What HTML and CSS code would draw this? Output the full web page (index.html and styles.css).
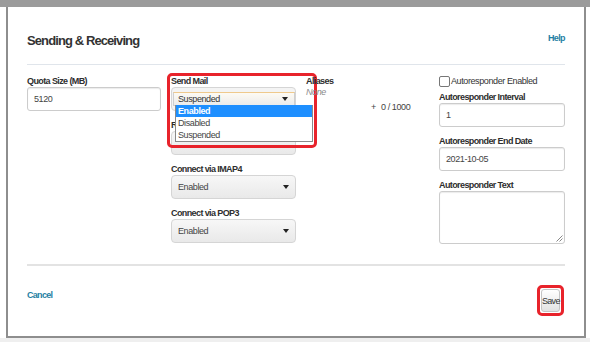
FILE: index.html
```html
<!DOCTYPE html>
<html lang="en">
<head>
    <meta charset="UTF-8">
    <meta name="viewport" content="width=device-width, initial-scale=1.0">
    <title>Sending &amp; Receiving</title>
    <link rel="stylesheet" href="styles.css">
</head>
<body>

    <div class="topbar"></div>

    <div class="stage">
        <div class="modal">

            <header class="modal-header">
                <h2 class="title">Sending &amp; Receiving</h2>
                <a class="link help" href="#">Help</a>
            </header>

            <div class="rule"></div>

            <div class="modal-body">

                <div class="col">
                    <div class="group group-last">
                        <label class="field-label">Quota Size (MB)</label>
                        <div class="input">5120</div>
                    </div>
                </div>

                <div class="col col-mail">
                    <div class="group">
                        <label class="field-label">Send Mail</label>
                        <div class="select is-open">
                            <div class="select-native"><span>Suspended</span><i class="caret"></i></div>
                        </div>
                    </div>
                    <!-- sits under the open list, only its first letter shows -->
                    <div class="group">
                        <label class="field-label is-covered">Receive Mail</label>
                        <div class="select"></div>
                    </div>
                    <div class="group">
                        <label class="field-label">Connect via IMAP4</label>
                        <div class="select"><span>Enabled</span><i class="caret"></i></div>
                    </div>
                    <div class="group group-last">
                        <label class="field-label">Connect via POP3</label>
                        <div class="select"><span>Enabled</span><i class="caret"></i></div>
                    </div>

                    <ul class="dropdown">
                        <li class="selected">Enabled</li>
                        <li>Disabled</li>
                        <li>Suspended</li>
                    </ul>
                    <div class="mark mark-mail"></div>
                </div>

                <div class="col col-aliases">
                    <label class="field-label">Aliases</label>
                    <p class="none">None</p>
                    <p class="count"><span class="plus">+</span> 0 / 1000</p>
                </div>

                <div class="col">
                    <label class="check"><i class="checkbox"></i>Autoresponder Enabled</label>
                    <div class="group group-first">
                        <label class="field-label">Autoresponder Interval</label>
                        <div class="input">1</div>
                    </div>
                    <div class="group">
                        <label class="field-label">Autoresponder End Date</label>
                        <div class="input">2021-10-05</div>
                    </div>
                    <div class="group group-last">
                        <label class="field-label">Autoresponder Text</label>
                        <div class="input textarea">
                            <svg class="grip" width="7" height="7" viewBox="0 0 7 7">
                                <path d="M6.5 0.5 L0.5 6.5 M6.5 3.5 L3.5 6.5" stroke="#888" stroke-width="1" fill="none"/>
                            </svg>
                        </div>
                    </div>
                </div>

            </div>

            <div class="rule rule-footer"></div>

            <footer class="modal-footer">
                <a class="link cancel" href="#">Cancel</a>
                <div class="mark mark-save">
                    <button class="btn">Save</button>
                </div>
            </footer>

        </div>
    </div>

</body>
</html>
```

FILE: styles.css
```css
*{
    box-sizing: border-box;
    margin: 0;
    padding: 0;
}

body{
    background: #efefef;
    color: #333333;
    font-family: "Liberation Sans", Arial, sans-serif;
    font-size: 9px;
    letter-spacing: -0.4px;
    line-height: 11px;
}

.topbar{
    height: 7px;
    background: #9b9b9b;
}

.stage{
    height: 331px;
    background: #ffffff;
}

.modal{
    width: 580px;
    height: 331px;
    margin-left: 6px;
    padding: 26px 19px 0 19px;
    background: #ffffff;
    border: 2px solid #8e8e8e;
    border-top: 0;
}

.modal-header{
    display: flex;
    justify-content: space-between;
    align-items: flex-start;
    margin-bottom: 16px;
}

.title{
    font-size: 13px;
    line-height: 15px;
    font-weight: bold;
    letter-spacing: -0.9px;
    color: #333333;
}

.link{
    color: #1f7fa3;
    font-weight: bold;
    text-decoration: none;
}

.help{
    letter-spacing: -0.6px;
}

.rule{
    height: 1px;
    background: #e0e5eb;
}

.modal-body{
    display: grid;
    grid-template-columns: 134px 125px 1fr 126px;
    column-gap: 10px;
    margin-top: 11px;
}

.col{
    position: relative;
}

.group{
    margin-bottom: 9px;
}

.group-last{
    margin-bottom: 0;
}

.field-label{
    display: block;
    font-weight: bold;
    letter-spacing: -0.6px;
    color: #2e2e2e;
}

.is-covered{
    width: 5px;
    overflow: hidden;
    white-space: nowrap;
}

.input{
    height: 24px;
    padding: 0 6px;
    border: 1px solid #cccccc;
    border-radius: 3px;
    box-shadow: inset 0 1px 1px rgba(0, 0, 0, 0.08);
    line-height: 22px;
    color: #444444;
}

.textarea{
    position: relative;
    height: 53px;
}

.grip{
    position: absolute;
    right: 1px;
    bottom: 1px;
}

.select{
    display: flex;
    align-items: center;
    justify-content: space-between;
    height: 24px;
    padding: 0 6px;
    border: 1px solid #d5d5d5;
    border-radius: 4px;
    background: linear-gradient(#f7f7f7, #e9e9e9);
    color: #444444;
}

.caret{
    width: 0;
    height: 0;
    border-left: 3px solid transparent;
    border-right: 3px solid transparent;
    border-top: 4px solid #222222;
}

.select.is-open{
    align-items: flex-start;
    padding: 4px 0 0 1px;
    background: #f4f4f4;
}

.select-native{
    display: flex;
    align-items: center;
    justify-content: space-between;
    width: 122px;
    height: 14px;
    padding: 0 6px 0 4px;
    border: 1px solid #cfcfcf;
    border-top-color: #efc98c;
    background: linear-gradient(#fdfaf3, #ececec);
    color: #333333;
}

.dropdown{
    position: absolute;
    left: 4px;
    top: 29px;
    width: 138px;
    list-style: none;
    background: #ffffff;
    border: 1px solid #8a8a8a;
    border-top: 0;
}

.dropdown li{
    height: 12px;
    padding-left: 2px;
    line-height: 12px;
    color: #444444;
}

.dropdown .selected{
    background: #1e8fff;
    color: #ffffff;
    font-weight: bold;
}

.mark{
    border: 3px solid #e8232b;
    border-radius: 5px;
}

.mark-mail{
    position: absolute;
    left: -4px;
    top: -3px;
    width: 150px;
    height: 75px;
}

.none{
    font-style: italic;
    color: #8a8a8a;
    line-height: 10px;
}

.count{
    margin-top: 5px;
    padding-left: 65px;
    color: #444444;
}

.plus{
    margin-right: 3px;
}

.check{
    display: flex;
    align-items: center;
    height: 11px;
}

.checkbox{
    width: 11px;
    height: 11px;
    margin-right: 1px;
    border: 1px solid #777777;
    border-radius: 2px;
    background: #ffffff;
}

.group-first{
    margin-top: 5px;
}

.rule-footer{
    height: 2px;
    margin-top: 20px;
    background: #e3e3e3;
}

.modal-footer{
    display: flex;
    justify-content: space-between;
    align-items: flex-start;
    padding-top: 19px;
}

.cancel{
    margin-top: 5px;
    letter-spacing: -0.7px;
}

.mark-save{
    width: 27px;
    height: 31px;
    margin-right: 1px;
    padding: 1px;
}

.btn{
    width: 100%;
    height: 100%;
    border: 1px solid #c4c4c4;
    border-radius: 3px;
    background: linear-gradient(#ffffff, #e2e2e2);
    color: #333333;
    font-family: "Liberation Sans", Arial, sans-serif;
    font-size: 9px;
    letter-spacing: -0.7px;
}
```
